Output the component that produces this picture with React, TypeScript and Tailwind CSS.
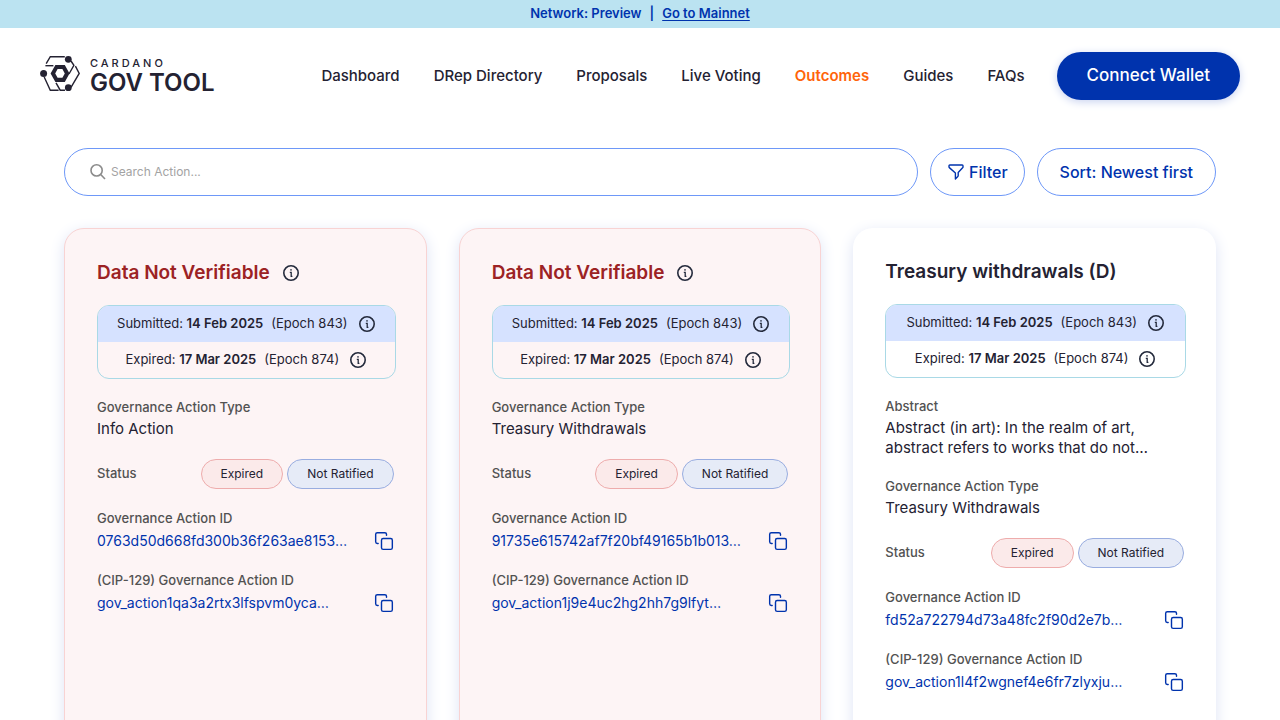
import React from "react";

type Action = {
  title: string;
  verifiable: boolean;
  abstract?: string[];
  type: string;
  id: string;
  cipId: string;
};

const actions: Action[] = [
  {
    title: "Data Not Verifiable",
    verifiable: false,
    type: "Info Action",
    id: "0763d50d668fd300b36f263ae8153…",
    cipId: "gov_action1qa3a2rtx3lfspvm0yca…",
  },
  {
    title: "Data Not Verifiable",
    verifiable: false,
    type: "Treasury Withdrawals",
    id: "91735e615742af7f20bf49165b1b013…",
    cipId: "gov_action1j9e4uc2hg2hh7g9lfyt…",
  },
  {
    title: "Treasury withdrawals (D)",
    verifiable: true,
    abstract: ["Abstract (in art): In the realm of art,", "abstract refers to works that do not…"],
    type: "Treasury Withdrawals",
    id: "fd52a722794d73a48fc2f90d2e7b…",
    cipId: "gov_action1l4f2wgnef4e6fr7zlyxju…",
  },
];

const navItems = ["Dashboard", "DRep Directory", "Proposals", "Live Voting", "Outcomes", "Guides", "FAQs"];

function LogoMark() {
  return (
    <svg width="40" height="37" viewBox="0 0 40 37" fill="none" stroke="#242232" strokeWidth="1.4" aria-hidden="true">
      <path d="M6.2 8.6 10.3 1.7H24.8" />
      <path d="M5.4 10.7H13.4" />
      <path d="M4.2 22 10.3 35.2H18.6" />
      <path d="M16 27.8 20.2 35.2H25" />
      <path d="M31 6 33.9 10.4 29 19" />
      <path d="M35.4 11.2 39.2 18.4 31 32.4" />
      <g fill="#242232" stroke="none">
        <circle cx="28.3" cy="4.3" r="3.4" />
        <circle cx="3.6" cy="18.4" r="3.5" />
        <circle cx="28.3" cy="32.7" r="3.4" />
        <path fillRule="evenodd" d="M15.4 9.9h9.4l4.7 8.5-4.7 8.6h-9.4l-4.8-8.6zM17.6 14l-2.4 4.4 2.4 4.4h4.8l2.4-4.4-2.4-4.4z" />
      </g>
    </svg>
  );
}

function InfoIcon() {
  return (
    <svg width="18" height="18" viewBox="0 0 18 18" fill="none" stroke="#242a3c" strokeWidth="1.6" aria-hidden="true">
      <circle cx="9" cy="9" r="7.2" />
      <path d="M7.8 8.4H9.2V12.4H10.4" strokeWidth="1.3" />
      <circle cx="9" cy="5.9" r="0.8" fill="#242a3c" stroke="none" />
    </svg>
  );
}

function InfoButton({ label }: { label: string }) {
  return (
    <button type="button" aria-label={label} className="flex shrink-0">
      <InfoIcon />
    </button>
  );
}

function CopyIcon() {
  return (
    <svg width="20" height="20" viewBox="0 0 24 24" fill="none" stroke="#0033ad" strokeWidth="1.7" strokeLinecap="round" strokeLinejoin="round" aria-hidden="true">
      <rect x="9" y="9" width="13" height="13" rx="2" />
      <path d="M5 15H4a2 2 0 0 1-2-2V4a2 2 0 0 1 2-2h9a2 2 0 0 1 2 2v1" />
    </svg>
  );
}

function DateRow({ label, date, epoch }: { label: string; date: string; epoch: string }) {
  return (
    <div className="flex h-9 items-center justify-center gap-2.5 text-[13px] whitespace-nowrap">
      <span>
        {label}: <strong className="font-semibold">{date}</strong>
        <span className="ml-2">(Epoch {epoch})</span>
      </span>
      <InfoButton label={`About the ${label.toLowerCase()} date`} />
    </div>
  );
}

function Field({ label, children }: { label: string; children: React.ReactNode }) {
  return (
    <div className="flex flex-col gap-1">
      <h3 className="text-[13px] leading-4 font-medium text-[#525252]">{label}</h3>
      <div className="text-[15px] leading-5">{children}</div>
    </div>
  );
}

function IdField({ label, value }: { label: string; value: string }) {
  return (
    <div className="flex flex-col gap-1">
      <h3 className="text-[13px] leading-[18px] font-medium text-[#525252]">{label}</h3>
      <div className="flex h-5 items-center justify-between gap-2 text-sm whitespace-nowrap text-[#0033ad]">
        <span>{value}</span>
        <button type="button" aria-label={`Copy ${label}`} className="shrink-0">
          <CopyIcon />
        </button>
      </div>
    </div>
  );
}

function ActionCard({ action }: { action: Action }) {
  const frame = action.verifiable ? "bg-white" : "border border-[#f8d3d3] bg-[#fdf4f5]";
  return (
    <article className={`flex min-w-0 flex-col gap-5 rounded-[20px] p-8 pb-28 shadow-[0_4px_15px_0_#dde3f5] ${frame}`}>
      <div className="flex h-6 items-center gap-3">
        <h2 className={`text-[19px] leading-6 font-semibold whitespace-nowrap ${action.verifiable ? "" : "text-[#9c2224]"}`}>{action.title}</h2>
        {!action.verifiable && <InfoButton label="Why the data is not verifiable" />}
      </div>
      <div className="-mr-0.5 overflow-hidden rounded-xl border border-[#a9d9e6]">
        <div className="bg-[#d6e2ff]">
          <DateRow label="Submitted" date="14 Feb 2025" epoch="843" />
        </div>
        <DateRow label="Expired" date="17 Mar 2025" epoch="874" />
      </div>
      {action.abstract && (
        <Field label="Abstract">
          {action.abstract.map((line) => (
            <span key={line} className="block whitespace-nowrap">
              {line}
            </span>
          ))}
        </Field>
      )}
      <Field label="Governance Action Type">{action.type}</Field>
      <div className="flex items-center justify-between">
        <h3 className="text-[13px] font-medium text-[#525252]">Status</h3>
        <div className="flex gap-1 text-xs">
          <span className="flex h-[30px] items-center rounded-full border border-[#eeacac] bg-[#fbeaea] px-[19px]">Expired</span>
          <span className="flex h-[30px] items-center rounded-full border border-[#99ade0] bg-[#e6ebf7] px-[19px]">Not Ratified</span>
        </div>
      </div>
      <IdField label="Governance Action ID" value={action.id} />
      <IdField label="(CIP-129) Governance Action ID" value={action.cipId} />
    </article>
  );
}

export default function App() {
  return (
    <div className="h-screen overflow-hidden bg-white font-['Inter',sans-serif] text-[#242232]">
      <div className="flex h-7 items-center justify-center bg-[#bbe3f1] text-[13px] font-semibold text-[#0033ad]">
        <span>Network: Preview</span>
        <span className="mx-2">|</span>
        <a href="#mainnet" className="underline decoration-1 underline-offset-2">
          Go to Mainnet
        </a>
      </div>

      <header className="flex items-center justify-between px-10 py-6">
        <a href="#home" className="flex items-start gap-2.5 self-start pt-[3px]" aria-label="Cardano Gov Tool">
          <LogoMark />
          <span className="flex flex-col">
            <span className="text-[11px] leading-4 font-medium tracking-[3px]">CARDANO</span>
            <span className="text-2xl leading-6 font-semibold whitespace-nowrap">GOV TOOL</span>
          </span>
        </a>
        <div className="flex items-center gap-8">
          <nav className="flex items-center gap-[34px] text-[15px] whitespace-nowrap">
            {navItems.map((item) => (
              <a key={item} href={`#${item}`} className={item === "Outcomes" ? "font-semibold text-[#ff640a]" : "font-medium"}>
                {item}
              </a>
            ))}
          </nav>
          <button type="button" className="h-12 rounded-full bg-[#0033ad] px-[30px] text-[17px] font-medium whitespace-nowrap text-white shadow-[0_2px_8px_0_#c9d3f0]">
            Connect Wallet
          </button>
        </div>
      </header>

      <main className="px-16 pt-6">
        <div className="mb-8 flex gap-3">
          <label className="flex h-12 flex-1 items-center gap-1 rounded-full border border-[#6e98f8] px-6">
            <svg width="18" height="18" viewBox="0 0 18 18" fill="none" stroke="#8c8c8c" strokeWidth="1.6" aria-hidden="true">
              <circle cx="7.6" cy="7.4" r="5.6" />
              <path d="M11.7 11.5 16 16" />
            </svg>
            <input type="text" aria-label="Search Action" placeholder="Search Action..." className="min-w-0 flex-1 text-xs outline-none placeholder:text-[#a3a3a3]" />
          </label>
          <button type="button" className="flex h-12 items-center gap-1 rounded-full border border-[#6e98f8] px-4 text-base font-medium text-[#0033ad]">
            <svg width="18" height="18" viewBox="0 0 18 18" fill="none" stroke="#0033ad" strokeWidth="1.4" strokeLinejoin="round" aria-hidden="true">
              <path d="M2.8 2H15.2Q16 2 16 2.8V3.9Q16 4.4 15.6 4.8L11.2 9.4V12.6Q11.2 13.2 10.8 13.6L8.4 16V10L2.6 4.9Q2 4.4 2 3.8V2.8Q2 2 2.8 2Z" />
            </svg>
            Filter
          </button>
          <button type="button" className="h-12 rounded-full border border-[#6e98f8] px-[22px] text-base font-medium whitespace-nowrap text-[#0033ad]">
            Sort: Newest first
          </button>
        </div>

        <section aria-label="Governance action outcomes" className="grid grid-cols-3 gap-8">
          {actions.map((action) => (
            <ActionCard key={action.id} action={action} />
          ))}
        </section>
      </main>
    </div>
  );
}
